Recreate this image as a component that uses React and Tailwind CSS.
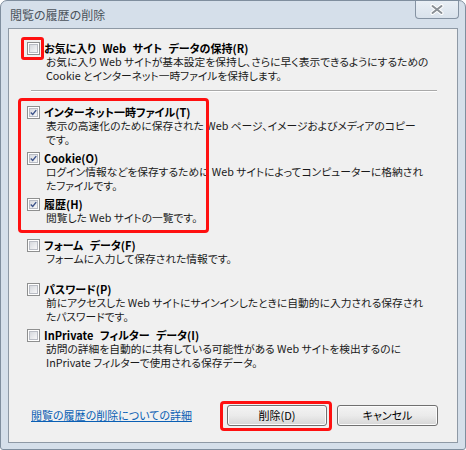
import React from 'react';

const font = { fontFamily: '"Noto Sans CJK JP", "Liberation Sans", sans-serif' };

function CheckBox({ checked }) {
  return (
    <div className="w-[13px] h-[13px] border border-[#8e8f8f] bg-white p-px shrink-0">
      <div className="w-full h-full border border-[#b9bcc4] bg-gradient-to-br from-[#d6d9de] to-[#f7f7f8] flex items-center justify-center">
        {checked && (
          <svg width="9" height="9" viewBox="0 0 9 9">
            <path d="M1 4.5 L3.5 7 L8 1.5" fill="none" stroke="#3c5289" strokeWidth="1.8" />
          </svg>
        )}
      </div>
    </div>
  );
}

function Option({ label, lines, checked, className = '', mark }) {
  return (
    <div className={`flex ${className}`}>
      <div className="relative w-[17px] pt-px shrink-0">
        <CheckBox checked={checked} />
        {mark && (
          <div className="absolute left-[-6px] top-[-4px] w-[23px] h-[23px] border-[3px] border-[#ff1010] rounded-[3px] pointer-events-none" />
        )}
      </div>
      <div className="whitespace-nowrap leading-[14px]">
        <div className="font-bold text-black [word-spacing:4px]">{label}</div>
        <div className="pl-[2px] text-[10.75px] text-[#1a1a1a]">
          {lines.map((l, i) => (
            <div key={i}>{l}</div>
          ))}
        </div>
      </div>
    </div>
  );
}

function Button({ children }) {
  return (
    <div className="h-[21px] border border-[#707070] rounded-[3px] bg-gradient-to-b from-[#f3f3f3] via-[#ebebeb] to-[#d6d6d6] flex items-center justify-center text-black shadow-[inset_0_0_0_1px_#fcfcfc]">
      {children}
    </div>
  );
}

export default function App() {
  return (
    <div
      className="w-[466px] h-[450px] bg-[#d5dfea] border border-[#7f8e9e] rounded-t-[7px] rounded-b-[3px] flex flex-col text-[11px] [font-feature-settings:'palt']"
      style={font}
    >
      <div className="h-[27px] flex items-start justify-between">
        <div className="pl-[9px] pt-[5px] text-[12px] text-[#4a525a]">閲覧の履歴の削除</div>
        <div className="mr-[6px] w-[44px] h-[18px] border border-t-0 border-[#8593a3] rounded-b-[4px] bg-gradient-to-b from-[#e9eff5] to-[#d9e2ec] flex items-center justify-center">
          <svg width="14" height="11" viewBox="0 0 14 11">
            <path d="M2.5 2 L11.5 9 M11.5 2 L2.5 9" stroke="#ffffff" strokeWidth="4" strokeLinecap="round" />
            <path d="M2.5 2 L11.5 9 M11.5 2 L2.5 9" stroke="#8a9096" strokeWidth="2" strokeLinecap="round" />
          </svg>
        </div>
      </div>

      <div className="mx-[7px] mb-[6px] flex-1 border border-[#8e99a5] bg-[#f0f0f0]">
        <Option
          className="pl-[18px] pt-[12px]"
          checked={false}
          mark
          label="お気に入り Web サイト データの保持(R)"
          lines={[
            'お気に入り Web サイトが基本設定を保持し、さらに早く表示できるようにするための',
            'Cookie とインターネット一時ファイルを保持します。',
          ]}
        />

        <div className="ml-[22px] mt-[7px] w-[406px] h-px bg-[#a9a9a9]" />
        <div className="ml-[22px] w-[406px] h-px bg-white" />

        <div className="relative pl-[18px] mt-[13px]">
          <Option
            checked
            label="インターネット一時ファイル(T)"
            lines={['表示の高速化のために保存された Web ページ、イメージおよびメディアのコピー', 'です。']}
          />
          <Option
            className="mt-[4px]"
            checked
            label="Cookie(O)"
            lines={['ログイン情報などを保存するために Web サイトによってコンピューターに格納され', 'たファイルです。']}
          />
          <Option
            className="mt-[4px]"
            checked
            label="履歴(H)"
            lines={['閲覧した Web サイトの一覧です。']}
          />
          <div className="absolute left-[9px] top-[-7px] w-[191px] h-[135px] border-[3px] border-[#ff1010] rounded-[4px] pointer-events-none" />
        </div>

        <div className="pl-[18px]">
          <Option
            className="mt-[13px]"
            label="フォーム データ(F)"
            lines={['フォームに入力して保存された情報です。']}
          />
          <Option
            className="mt-[16px]"
            label="パスワード(P)"
            lines={['前にアクセスした Web サイトにサインインしたときに自動的に入力される保存され', 'たパスワードです。']}
          />
          <Option
            className="mt-[4px]"
            label="InPrivate フィルター データ(I)"
            lines={['訪問の詳細を自動的に共有している可能性がある Web サイトを検出するのに', 'InPrivate フィルターで使用される保存データ。']}
          />
        </div>

        <div className="flex items-center pl-[22px] mt-[35px]">
          <div className="w-[196px]">
            <span className="text-[#0a5fb4] underline">閲覧の履歴の削除についての詳細</span>
          </div>
          <div className="relative w-[100px]">
            <Button>削除(D)</Button>
            <div className="absolute left-[-7px] top-[-4px] w-[112px] h-[30px] border-[3px] border-[#ff1010] rounded-[4px] pointer-events-none" />
          </div>
          <div className="ml-[10px] w-[101px]">
            <Button>キャンセル</Button>
          </div>
        </div>
      </div>
    </div>
  );
}
